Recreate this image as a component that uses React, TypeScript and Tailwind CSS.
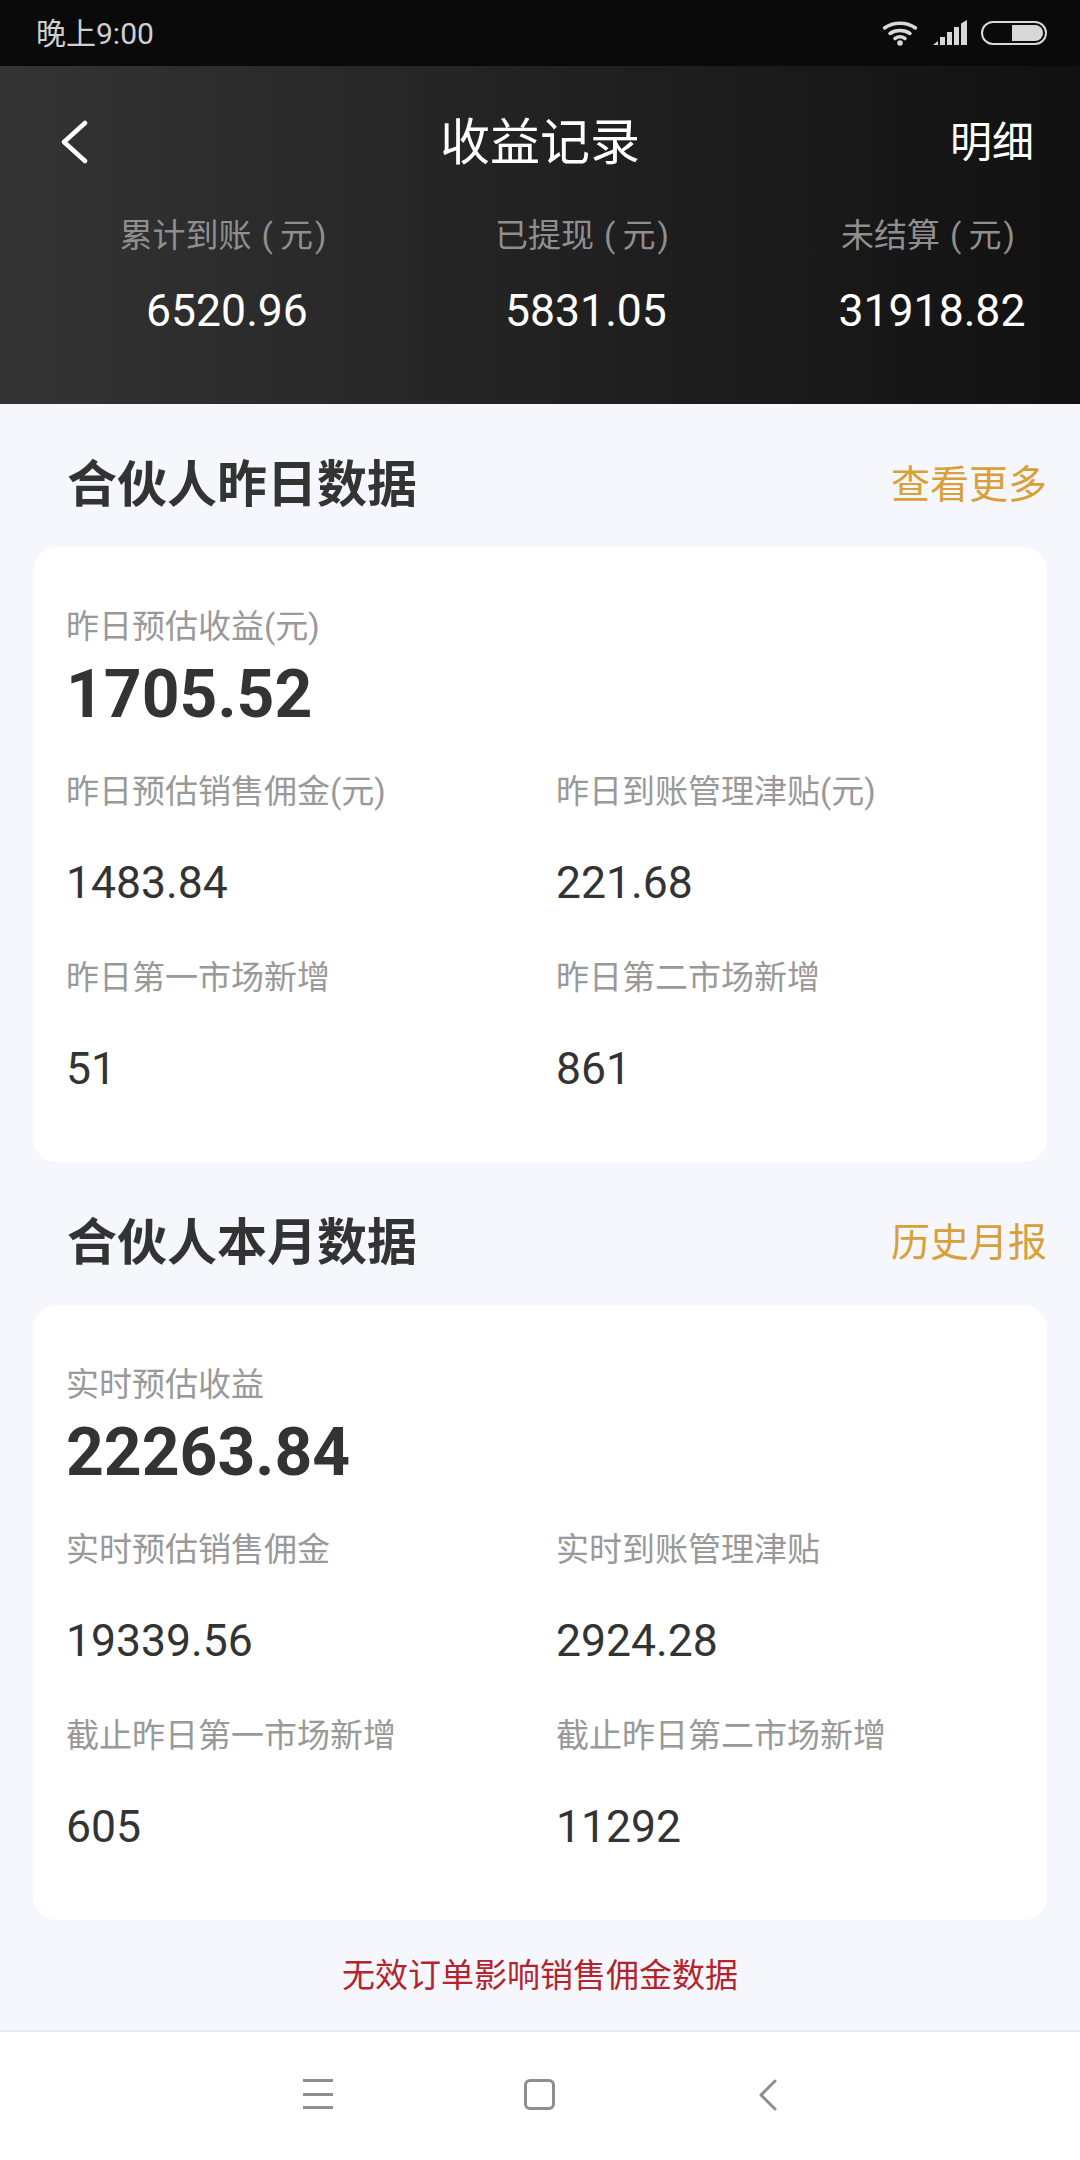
import React from "react";

const cjk = "font-['Roboto','Noto_Sans_CJK_SC',sans-serif]";

function WifiIcon() {
  return (
    <svg width="36" height="26" viewBox="0 0 36 26" fill="none" stroke="#d8d8d8" strokeWidth="3.500" strokeLinecap="round">
      <path d="M2.500 8C11 1.500 25 1.500 33.500 8" />
      <path d="M8 13.500C13.500 9.500 22.500 9.500 28 13.500" />
      <path d="M13 18.500C16 16.500 20 16.500 23 18.500" />
      <circle cx="18" cy="23" r="2.800" fill="#d8d8d8" stroke="none" />
    </svg>
  );
}

function SignalIcon() {
  return (
    <svg width="36" height="26" viewBox="0 0 36 26" fill="#d8d8d8">
      <path d="M1 25L6 21V25Z" />
      <rect x="8" y="17" width="5" height="8" />
      <rect x="15" y="12" width="5" height="13" />
      <rect x="22" y="7" width="5" height="18" />
      <path d="M29 3.500L35 0V25H29Z" />
    </svg>
  );
}

function BatteryIcon() {
  return (
    <div className="ml-[-1px] flex h-[24px] w-[66px] items-stretch justify-end overflow-hidden rounded-full border-2 border-[#d8d8d8] p-[2px]">
      <div className="w-[31px] rounded-r-full bg-[#d8d8d8]" />
    </div>
  );
}

function Stat({ label, value, className }: { label: string; value: string; className: string }) {
  return (
    <div className={`flex flex-col items-center ${className}`}>
      <div className="mr-[8px] h-[44px] whitespace-nowrap text-[33px] leading-[44px] text-[#8f8f8f]">
        {label}
        <span className="ml-[10px] mr-[7px]">(</span>元<span className="ml-[2px]">)</span>
      </div>
      <div className="mt-[23px] h-[60px] whitespace-nowrap text-[44.5px] leading-[60px] text-white">{value}</div>
    </div>
  );
}

function Field({ label, value }: { label: string; value: string }) {
  return (
    <div>
      <div className="h-[44px] whitespace-nowrap text-[33px] leading-[44px] text-[#999999]">{label}</div>
      <div className="mt-[39px] h-[60px] text-[44.5px] leading-[60px] text-[#333333]">{value}</div>
    </div>
  );
}

function DataCard({
  title,
  link,
  headLabel,
  headValue,
  fields,
}: {
  title: string;
  link: string;
  headLabel: string;
  headValue: string;
  fields: { label: string; value: string }[];
}) {
  return (
    <section>
      <div className="flex h-[60px] items-center justify-between pl-[67px] pr-[33px] pt-[3px]">
        <h2 className="text-[50px] font-bold leading-[56px] text-[#333333]">{title}</h2>
        <a className="text-[39px] leading-[56px] text-[#d9a03a]">{link}</a>
      </div>
      <div className="mx-[33px] mt-[34px] rounded-[24px] bg-white pb-[63px] pl-[33px] pt-[58px]">
        <div className="h-[44px] text-[33px] leading-[44px] text-[#999999]">{headLabel}</div>
        <div className="mt-[8px] h-[76px] text-[66px] font-bold leading-[76px] text-[#333333]">{headValue}</div>
        <div className="mt-[37px] grid grid-cols-[490px_1fr] gap-y-[43px]">
          {fields.map((f) => (
            <Field key={f.label} label={f.label} value={f.value} />
          ))}
        </div>
      </div>
    </section>
  );
}

export default function App() {
  return (
    <div className={`flex h-[2160px] w-[1080px] flex-col bg-[#f5f7fc] ${cjk}`}>
      {/* status bar */}
      <div className="flex h-[66px] items-center justify-between bg-[#0a0a0a] pl-[36px] pr-[33px]">
        <span className="text-[30px] text-[#cfcfcf]">晚上9:00</span>
        <div className="flex items-center gap-[14px]">
          <WifiIcon />
          <SignalIcon />
          <BatteryIcon />
        </div>
      </div>

      {/* header */}
      <header className="h-[338px] bg-gradient-to-r from-[#343434] to-[#111111]">
        <div className="relative mt-[47px] flex h-[60px] items-center justify-between pl-[60px] pr-[46px]">
          <svg width="30" height="46" viewBox="0 0 30 46" fill="none" stroke="white" strokeWidth="4.500" strokeLinecap="round" strokeLinejoin="round">
            <path d="M25 3L4 22L25 41" />
          </svg>
          <h1 className="absolute left-0 right-0 text-center text-[50px] leading-[60px] text-white">收益记录</h1>
          <span className="text-[42px] leading-[60px] text-white">明细</span>
        </div>
        <div className="mt-[41px] flex">
          <Stat label="累计到账" value="6520.96" className="ml-[120px] w-[214px]" />
          <Stat label="已提现" value="5831.05" className="ml-[165px] w-[174px]" />
          <Stat label="未结算" value="31918.82" className="ml-[164px] w-[190px]" />
        </div>
      </header>

      {/* scrolling content */}
      <main className="flex flex-1 flex-col pt-[49px]">
        <DataCard
          title="合伙人昨日数据"
          link="查看更多"
          headLabel="昨日预估收益(元)"
          headValue="1705.52"
          fields={[
            { label: "昨日预估销售佣金(元)", value: "1483.84" },
            { label: "昨日到账管理津贴(元)", value: "221.68" },
            { label: "昨日第一市场新增", value: "51" },
            { label: "昨日第二市场新增", value: "861" },
          ]}
        />
        <div className="h-[49px]" />
        <DataCard
          title="合伙人本月数据"
          link="历史月报"
          headLabel="实时预估收益"
          headValue="22263.84"
          fields={[
            { label: "实时预估销售佣金", value: "19339.56" },
            { label: "实时到账管理津贴", value: "2924.28" },
            { label: "截止昨日第一市场新增", value: "605" },
            { label: "截止昨日第二市场新增", value: "11292" },
          ]}
        />
        <p className="mt-[34px] h-[44px] text-center text-[33px] leading-[44px] text-[#b3242c]">无效订单影响销售佣金数据</p>
      </main>

      {/* system navigation */}
      <nav className="flex h-[130px] items-start border-t-2 border-[#e6e9f0] bg-white pt-[47px]">
        <div className="ml-[303px] flex h-[30px] w-[30px] flex-col justify-between">
          <div className="h-[3px] bg-[#8e8e8e]" />
          <div className="h-[3px] bg-[#8e8e8e]" />
          <div className="h-[3px] bg-[#8e8e8e]" />
        </div>
        <div className="ml-[191px] h-[31px] w-[31px] rounded-[6px] border-[3px] border-[#8e8e8e]" />
        <svg className="ml-[203px]" width="20" height="32" viewBox="0 0 20 32" fill="none" stroke="#8e8e8e" strokeWidth="3" strokeLinecap="round" strokeLinejoin="round">
          <path d="M17 2L3 16L17 30" />
        </svg>
      </nav>
    </div>
  );
}
